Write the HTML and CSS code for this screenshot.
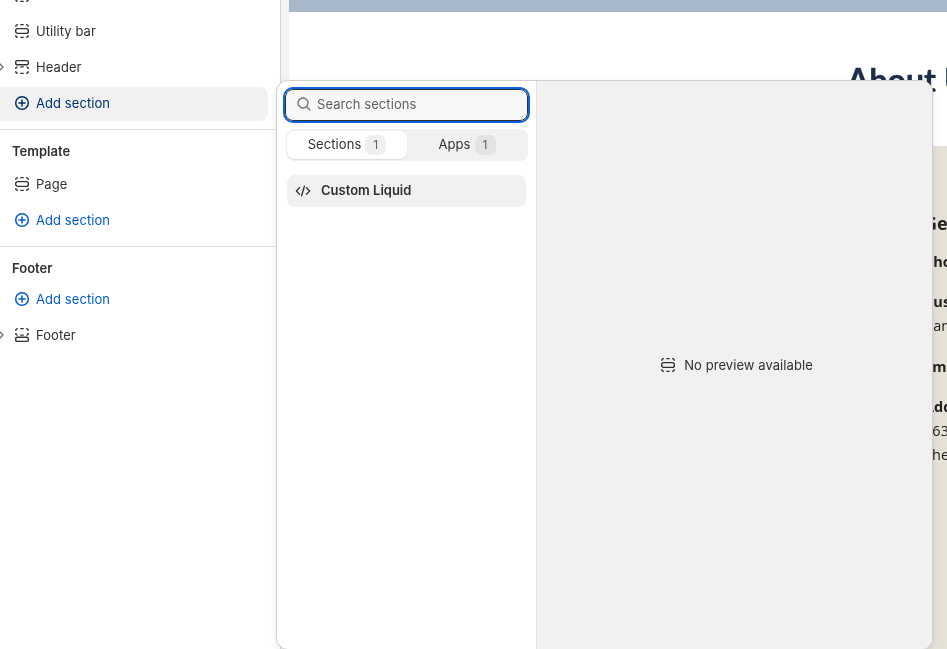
FILE: index.html
```html
<!DOCTYPE html>
<html lang="en">
<head>
<meta charset="utf-8">
<title>Theme editor</title>
<link rel="stylesheet" href="styles.css">
</head>
<body>
<svg class="defs" width="0" height="0" aria-hidden="true">
  <symbol id="sec-mid" viewBox="0 0 16 16">
    <rect x="1.7" y="5.6" width="12.6" height="4.8" rx="2" fill="none" stroke="currentColor" stroke-width="1.4"/>
    <path d="M1.7 3.7A2.2 2.2 0 0 1 3.9 1.6M6.3 1.6h3.4M12.1 1.6a2.2 2.2 0 0 1 2.2 2.1M1.7 12.3a2.2 2.2 0 0 0 2.2 2.1M6.3 14.4h3.4M12.1 14.4a2.2 2.2 0 0 0 2.2-2.1" fill="none" stroke="currentColor" stroke-width="1.4"/>
  </symbol>
  <symbol id="sec-top" viewBox="0 0 16 16">
    <rect x="1.7" y="1.6" width="12.6" height="4.2" rx="1.5" fill="none" stroke="currentColor" stroke-width="1.4"/>
    <path d="M1.7 10V9.6A1.8 1.8 0 0 1 3.5 7.9M6.3 7.9h3.4M12.5 7.9a1.8 1.8 0 0 1 1.8 1.7v.4M1.7 12.3a2.2 2.2 0 0 0 2.2 2.1M6.3 14.4h3.4M12.1 14.4a2.2 2.2 0 0 0 2.2-2.1" fill="none" stroke="currentColor" stroke-width="1.4"/>
  </symbol>
  <symbol id="sec-bottom" viewBox="0 0 16 16">
    <rect x="1.7" y="10.2" width="12.6" height="4.2" rx="1.5" fill="none" stroke="currentColor" stroke-width="1.4"/>
    <path d="M1.7 3.7A2.2 2.2 0 0 1 3.9 1.6M6.3 1.6h3.4M12.1 1.6a2.2 2.2 0 0 1 2.2 2.1M1.7 6v.4a1.8 1.8 0 0 0 1.8 1.7M6.3 8.1h3.4M12.5 8.1a1.8 1.8 0 0 0 1.8-1.7V6" fill="none" stroke="currentColor" stroke-width="1.4"/>
  </symbol>
  <symbol id="plus" viewBox="0 0 16 16">
    <circle cx="8" cy="8" r="6.3" fill="none" stroke="currentColor" stroke-width="1.5"/>
    <path d="M8 4.9v6.2M4.9 8h6.2" fill="none" stroke="currentColor" stroke-width="1.5" stroke-linecap="round"/>
  </symbol>
  <symbol id="chev" viewBox="0 0 8 10">
    <path d="M2 1l4 4-4 4" fill="none" stroke="currentColor" stroke-width="1.3" stroke-linecap="round" stroke-linejoin="round"/>
  </symbol>
</svg>

<div class="app">
  <aside class="sidebar">
    <div class="group group-head">
      <div class="row"><svg class="ico"><use href="#sec-mid"/></svg><span>Announcement bar</span></div>
      <div class="row"><svg class="ico"><use href="#sec-mid"/></svg><span>Utility bar</span></div>
      <div class="row"><svg class="chevron"><use href="#chev"/></svg><svg class="ico"><use href="#sec-top"/></svg><span>Header</span></div>
      <div class="row row-add row-add-active"><svg class="ico"><use href="#plus"/></svg><span>Add section</span></div>
    </div>
    <div class="group group-template">
      <h2 class="group-title">Template</h2>
      <div class="row"><svg class="ico"><use href="#sec-mid"/></svg><span>Page</span></div>
      <div class="row row-add"><svg class="ico"><use href="#plus"/></svg><span>Add section</span></div>
    </div>
    <div class="group group-footer">
      <h2 class="group-title">Footer</h2>
      <div class="row row-add"><svg class="ico"><use href="#plus"/></svg><span>Add section</span></div>
      <div class="row"><svg class="chevron"><use href="#chev"/></svg><svg class="ico"><use href="#sec-bottom"/></svg><span>Footer</span></div>
    </div>
  </aside>

  <div class="gutter"></div>

  <main class="preview">
    <div class="announce"></div>
    <div class="hero"><h1>About Us</h1></div>
    <section class="contact">
      <h2>Get in touch</h2>
      <p class="strong">Phone</p>
      <p class="strong">Customer service</p>
      <p>Canada</p>
      <p class="strong">Email</p>
      <p class="strong">Address</p>
      <p>1632 Main St</p>
      <p>The City</p>
    </section>
  </main>
</div>

<div class="picker">
  <div class="picker-left">
    <label class="search">
      <svg class="search-ico" viewBox="0 0 16 16"><circle cx="7" cy="7" r="5" fill="none" stroke="currentColor" stroke-width="1.3"/><path d="M10.7 10.7l3.3 3.3" fill="none" stroke="currentColor" stroke-width="1.3" stroke-linecap="round"/></svg>
      <span>Search sections</span>
    </label>
    <div class="tabs">
      <div class="tab tab-active"><span class="tab-label">Sections</span> <span class="badge">1</span></div>
      <div class="tab"><span class="tab-label">Apps</span> <span class="badge badge-dark">1</span></div>
    </div>
    <div class="result">
      <svg class="code-ico" viewBox="0 0 16 16"><path d="M4.6 4.6L1.4 8l3.2 3.4M11.4 4.6L14.6 8l-3.2 3.4M9.4 3.2L6.6 12.8" fill="none" stroke="currentColor" stroke-width="1.3" stroke-linecap="round" stroke-linejoin="round"/></svg>
      <span class="result-label">Custom Liquid</span>
    </div>
  </div>
  <div class="picker-right">
    <svg class="ico"><use href="#sec-mid"/></svg>
    <span>No preview available</span>
  </div>
</div>
</body>
</html>
```
FILE: styles.css
```css
* { box-sizing: border-box; }
html, body { margin: 0; height: 100%; overflow: hidden; }
body {
  position: relative;
  background: #fff;
  color: #303030;
  font: 13px/20px Inter, "Liberation Sans", sans-serif;
  letter-spacing: .07px;
}
.defs { position: absolute; }
.app { display: flex; height: 649px; will-change: transform; }

.sidebar {
  flex: none;
  width: 281px;
  height: 649px;
  overflow: hidden;
  border-right: 1px solid #d4d4d4;
  background: #fff;
}
.group { padding-bottom: 8px; border-bottom: 1px solid #e3e3e3; }
.group-head { margin-top: -23px; padding-right: 12px; padding-bottom: 8px; }
.group-template { padding-top: 11px; padding-bottom: 8px; padding-right: 12px; }
.group-footer { padding-top: 11px; padding-right: 12px; border-bottom: 0; }
.group-title {
  margin: 0;
  padding-left: 12px;
  font-size: 13px;
  line-height: 20px;
  font-weight: 600;
  letter-spacing: 0;
}
.group-template .group-title { margin-bottom: 5px; }
.group-footer .group-title { margin-bottom: 3px; }
.row {
  position: relative;
  display: flex;
  align-items: center;
  gap: 6px;
  height: 36px;
  padding-left: 14px;
  border-radius: 0 8px 8px 0;
}
.ico { flex: none; width: 16px; height: 16px; color: #303030; }
.row-add { color: #005bd3; }
.row-add .ico { color: #005bd3; }
.row-add-active {
  height: 34px;
  margin-top: 2px;
  padding-bottom: 2px;
  background: #f1f1f1;
  color: #00306f;
}
.row-add-active .ico { color: #00306f; }
.chevron {
  position: absolute;
  left: -3px;
  top: 13px;
  width: 8px;
  height: 10px;
  color: #6f6f6f;
}

.gutter { flex: none; width: 8px; background: #f3f3f3; }

.preview { flex: 1; min-width: 0; overflow: hidden; background: #fff; }
.announce { height: 12px; background: #a7b8ca; }
.hero { height: 134px; padding: 46px 0 0 560px; white-space: nowrap; }
.hero h1 {
  margin: 0 0 0 -2px;
  color: #1c2d47;
  font: 700 32px/44px Lato, "Open Sans", sans-serif;
  -webkit-text-stroke: .4px #1c2d47;
}
.contact {
  height: 503px;
  padding: 65px 0 0 635px;
  background: #e5e1d6;
  color: #222;
  font: 14.5px/24px "Open Sans", "Noto Sans", sans-serif;
  white-space: nowrap;
}
.contact h2 { margin: 0 0 15px; font-size: 18px; line-height: 24px; font-weight: 700; }
.contact p { margin: 0; }
.contact .strong { font-weight: 700; margin-bottom: 16px; }
.contact .strong:nth-of-type(2) { margin-bottom: 0; }
.contact p:nth-of-type(3) { margin-bottom: 17px; }
.contact p:nth-of-type(5) { margin-bottom: 0; }

.picker {
  position: absolute;
  left: 276px;
  top: 80px;
  width: 657px;
  height: 570px;
  display: flex;
  overflow: hidden;
  background: #fff;
  border: 1px solid #cfcfcf;
  border-radius: 12px;
  box-shadow: 0 2px 6px rgba(0, 0, 0, .1);
  will-change: transform;
}
.picker-left {
  flex: none;
  width: 259px;
  padding: 8px 8px 0 8px;
  display: flex;
  flex-direction: column;
}
.search {
  display: flex;
  align-items: center;
  gap: 5px;
  height: 32px;
  padding: 0 0 2px 10px;
  background: #f7f7f7;
  border: 1px solid #303030;
  border-radius: 8px;
  outline: 2px solid #0a62dc;
  outline-offset: 0;
  color: #616161;
}
.search-ico { width: 16px; height: 16px; color: #6f6f6f; }
.tabs {
  display: flex;
  height: 32px;
  margin: 8px 0 0 1px;
  width: 242px;
  padding: 2px 1px;
  background: #f1f1f1;
  border-radius: 8px;
}
.tab {
  flex: 1;
  display: flex;
  align-items: center;
  justify-content: center;
  gap: 4px;
  border-radius: 8px;
}
.tab-label { padding-bottom: 2px; }
.tab-active { background: #fff; box-shadow: 0 1px 1px rgba(0, 0, 0, .08); }
.badge {
  display: flex;
  align-items: center;
  justify-content: center;
  width: 21px;
  height: 20px;
  border-radius: 7px;
  background: #efefef;
  color: #616161;
  font-size: 12px;
}
.badge-dark { background: #e3e3e3; }
.result {
  display: flex;
  align-items: center;
  gap: 10px;
  height: 32px;
  width: 239px;
  margin: 14px 0 0 2px;
  padding-left: 8px;
  border-radius: 8px;
  background: #f1f1f1;
  font-weight: 600;
  letter-spacing: 0;
}
.result-label { padding-bottom: 2px; }
.code-ico { width: 16px; height: 16px; color: #303030; }
.picker-right {
  flex: 1;
  display: flex;
  align-items: center;
  justify-content: center;
  gap: 8px;
  padding: 0 0 0 4px;
  background: #f1f1f1;
  border-left: 1px solid #e3e3e3;
  color: #303030;
}
```
